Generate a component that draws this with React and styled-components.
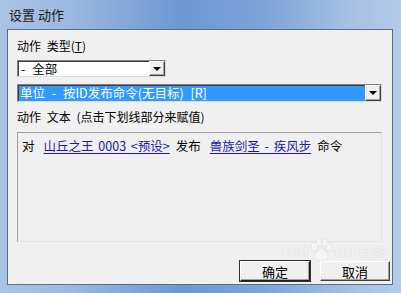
import React from 'react';
import styled, { createGlobalStyle } from 'styled-components';

const GlobalStyle = createGlobalStyle`
  html, body {
    margin: 0;
    padding: 0;
    background: #b9d1ea;
  }
  * { box-sizing: border-box; }
`;

const cjk = `"Noto Sans CJK SC", "DejaVu Sans", sans-serif`;

function App() {
  return (
    <>
      <GlobalStyle />
      <Window>
        <TitleBar>设置 动作</TitleBar>
        <Client>
          <Label>动作 类型(<u>T</u>)</Label>
          <Combo width="149px">
            <ComboText>- 全部</ComboText>
            <DropButton>
              <Arrow />
            </DropButton>
          </Combo>
          <Combo width="365px" selected>
            <ComboText selected>单位 - 按ID发布命令(无目标) [R]</ComboText>
            <DropButton>
              <Arrow />
            </DropButton>
          </Combo>
          <Label second>动作 文本 (点击下划线部分来赋值)</Label>
          <TextBox>
            <Plain>对</Plain>
            <Link>山丘之王 0003 &lt;预设&gt;</Link>
            <Plain>发布</Plain>
            <Link>兽族剑圣 - 疾风步</Link>
            <Plain>命令</Plain>
          </TextBox>
          <ButtonRow>
            <Button isDefault>确定</Button>
            <Button>取消</Button>
          </ButtonRow>
          <Watermark>
            <span>Bai</span>
            <svg width="24" height="23" viewBox="0 0 26 24">
              <ellipse cx="6" cy="8" rx="3" ry="4" fill="currentColor" />
              <ellipse cx="11" cy="3.5" rx="2.6" ry="3.3" fill="currentColor" />
              <ellipse cx="17" cy="3.5" rx="2.6" ry="3.3" fill="currentColor" />
              <ellipse cx="21.5" cy="8.5" rx="2.8" ry="3.6" fill="currentColor" />
              <path d="M13 10 C8 12 4 18 7 21 C10 23 16 23 19 21 C22 18 18 12 13 10 Z" fill="currentColor" />
            </svg>
            <span>du</span>
            <small>经验</small>
          </Watermark>
        </Client>
      </Window>
    </>
  );
}

const Window = styled.div`
  width: 401px;
  height: 293px;
  display: flex;
  flex-direction: column;
  padding: 0 8px 8px 7px;
  background: linear-gradient(90deg, #a9c3e4 0%, #9ab8e0 18%, #6c98d2 45%, #7aa3d8 65%, #a7c1e4 88%, #b4cbe8 100%);
  font-family: ${cjk};
  color: #000;
`;

const TitleBar = styled.div`
  height: 29px;
  display: flex;
  align-items: center;
  padding-left: 2px;
  font-size: 13px;
  color: #1b1b1b;
`;

const Client = styled.div`
  position: relative;
  flex: 1;
  background: #f0f0f0;
  border: 1px solid #5a6d88;
  padding: 9px 0 0 9px;
  display: flex;
  flex-direction: column;
  font-size: 12px;
`;

const Label = styled.div`
  height: 14px;
  line-height: 14px;
  margin-top: ${p => (p.second ? '8px' : '0')};
  margin-bottom: ${p => (p.second ? '8px' : '7px')};
  white-space: pre;
  word-spacing: 3px;
`;

const Combo = styled.div`
  width: ${p => p.width};
  height: ${p => (p.selected ? '18px' : '17px')};
  margin-bottom: ${p => (p.selected ? '0' : '7px')};
  display: flex;
  align-items: stretch;
  border-top: 1px solid #808080;
  border-left: 1px solid #808080;
  border-right: 1px solid #dcdcdc;
  border-bottom: 1px solid #dcdcdc;
  background: ${p => (p.selected ? '#3399ff' : '#fff')};
  box-shadow: inset 1px 1px 0 #404040;
`;

const ComboText = styled.div`
  flex: 1;
  padding-left: ${p => (p.selected ? '2px' : '3px')};
  line-height: 15px;
  font-size: 12.5px;
  word-spacing: 4px;
  color: ${p => (p.selected ? '#fff' : '#000')};
  white-space: nowrap;
`;

const DropButton = styled.div`
  width: 16px;
  background: #f0f0f0;
  border-top: 1px solid #fff;
  border-left: 1px solid #fff;
  border-right: 1px solid #404040;
  border-bottom: 1px solid #404040;
  box-shadow: inset -1px -1px 0 #a0a0a0;
  display: flex;
  align-items: center;
  justify-content: center;
`;

const Arrow = styled.div`
  width: 0;
  height: 0;
  border-left: 4px solid transparent;
  border-right: 4px solid transparent;
  border-top: 4px solid #000;
`;

const TextBox = styled.div`
  width: 365px;
  height: 110px;
  border-top: 1px solid #a0a0a0;
  border-left: 1px solid #a0a0a0;
  border-right: 1px solid #e3e3e3;
  border-bottom: 1px solid #e3e3e3;
  padding: 5px 0 0 4px;
  display: flex;
  align-items: flex-start;
  gap: 5px;
  line-height: 15px;
  font-size: 12.5px;
  white-space: nowrap;
`;

const Plain = styled.span`
  color: #000;
`;

const Link = styled.span`
  color: #1a1aa6;
  text-decoration: underline;
  text-underline-offset: 2px;
  margin-left: 4px;
  margin-right: 1px;
  word-spacing: 2px;
`;

const ButtonRow = styled.div`
  display: flex;
  justify-content: flex-end;
  gap: 10px;
  margin-top: 19px;
  padding-right: 2px;
`;

const Button = styled.div`
  width: 70px;
  height: 20px;
  display: flex;
  align-items: center;
  justify-content: center;
  background: #f0f0f0;
  font-size: 13px;
  border-top: 1px solid #fff;
  border-left: 1px solid #fff;
  border-right: 1px solid ${p => (p.isDefault ? '#202020' : '#404040')};
  border-bottom: 1px solid ${p => (p.isDefault ? '#202020' : '#404040')};
  box-shadow: inset -1px -1px 0 #a0a0a0${p => (p.isDefault ? ', 0 0 0 1px #303030' : '')};
`;

const Watermark = styled.div`
  position: absolute;
  left: 274px;
  top: 209px;
  display: flex;
  align-items: flex-end;
  gap: 1px;
  color: rgba(255, 255, 255, 0.75);
  text-shadow: 0 0 1px rgba(150, 150, 150, 0.45);
  font-family: "Liberation Sans", sans-serif;
  font-size: 17px;
  font-weight: bold;
  pointer-events: none;
  svg {
    filter: drop-shadow(0 0 1px rgba(150, 150, 150, 0.45));
  }
  small {
    font-family: ${cjk};
    font-size: 14px;
    margin-left: 3px;
  }
`;

export default App;
